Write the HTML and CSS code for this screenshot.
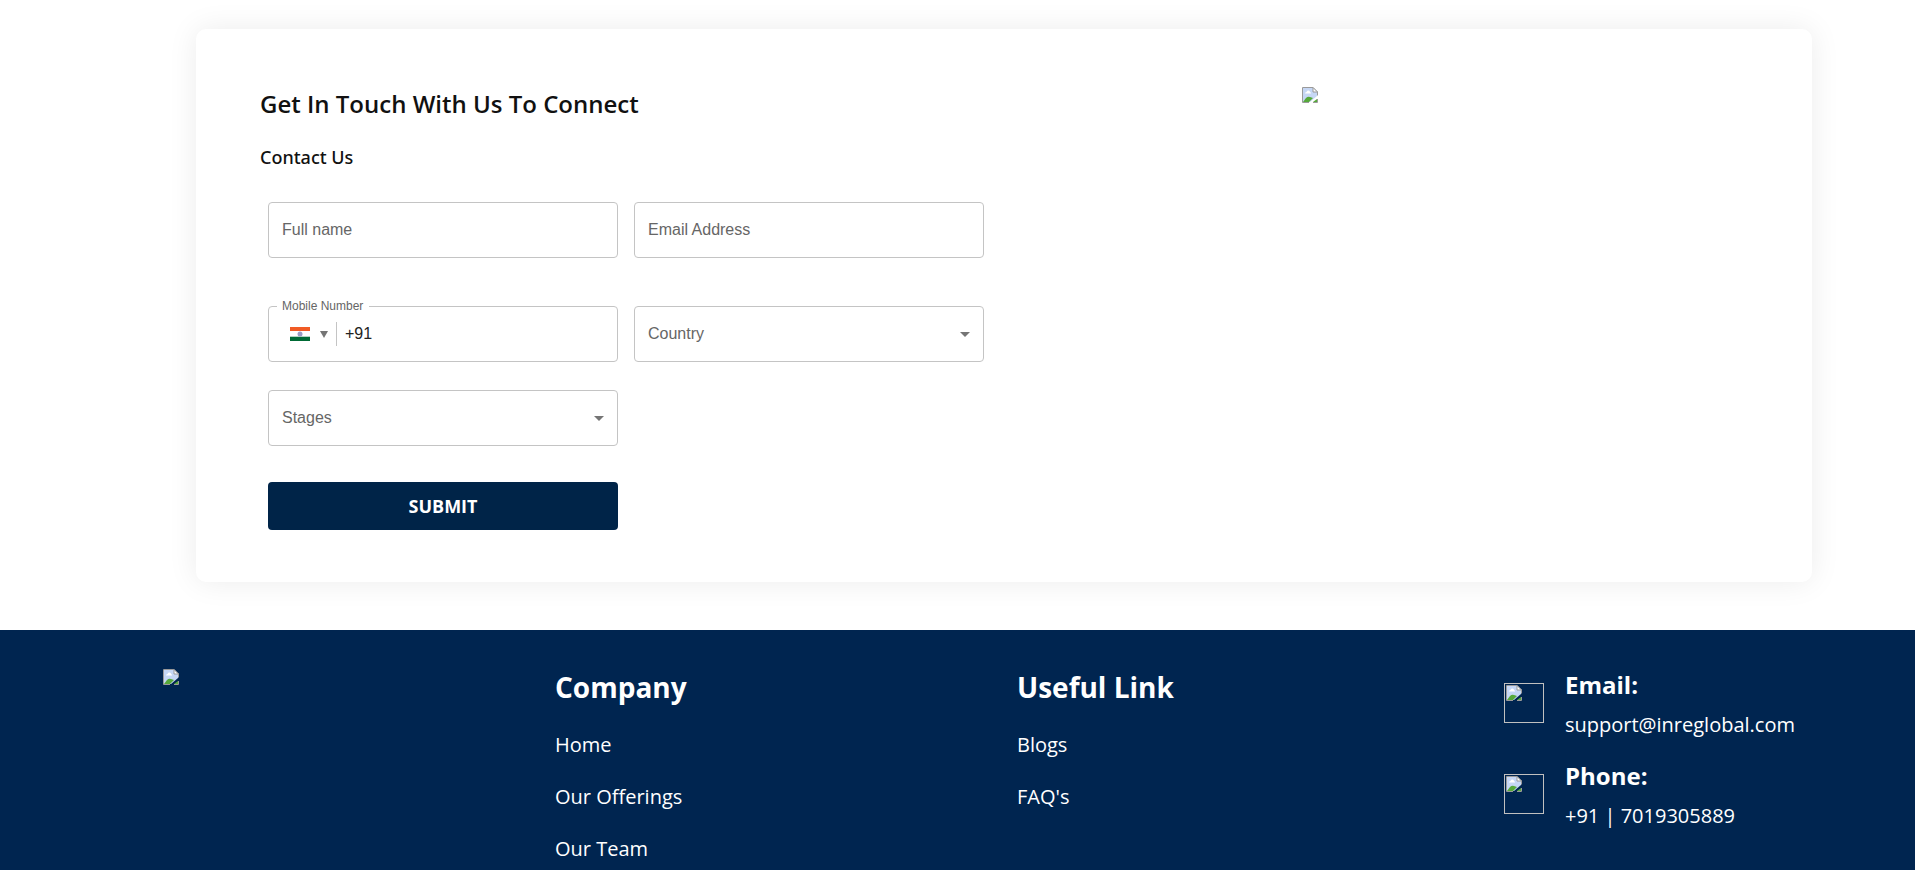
FILE: index.html
```html
<!DOCTYPE html>
<html lang="en">
<head>
<meta charset="utf-8">
<title>Contact Us</title>
<link rel="stylesheet" href="styles.css">
</head>
<body>
<svg class="sprite" aria-hidden="true">
  <symbol id="broken" viewBox="0 0 16 16">
    <path d="M1 1h10l4 4v4L8 15H1z" fill="#c6d7f5"/>
    <path d="M1 15l3-4q2-2 4-1l3 1-4 4z" fill="#56a93a"/>
    <path d="M3 6.500q0-1.500 1.500-1.500Q5 3 6.500 3.500 8 3.500 8 5q1 .2 1 1.500z" fill="#fff"/>
    <path d="M.5 15.500V.5H11L15.500 5v3.500M.5 15.500H7M11 15.500h4.500V12" fill="none" stroke="#9a9a9a"/>
    <path d="M11 .5V5h4.500z" fill="#fff" stroke="#9a9a9a"/>
    <path d="M11 15l4-3v3z" fill="#56a93a"/>
  </symbol>
</svg>
<main class="contact">
  <section class="card">
    <div class="content">
      <h1 class="title">Get In Touch With Us To Connect</h1>
      <h2 class="subtitle">Contact Us</h2>
      <form class="form">
        <div class="field"><input class="control" type="text" placeholder="Full name" aria-label="Full name"></div>
        <div class="field"><input class="control" type="email" placeholder="Email Address" aria-label="Email Address"></div>
        <fieldset class="field phone">
          <legend class="legend"><label for="mobile">Mobile Number</label></legend>
          <button class="flag-button" type="button" aria-label="Choose country code">
            <svg class="flag" viewBox="0 0 20 14" aria-hidden="true"><path fill="#f15b25" d="M0 0h20v4H0z"/><path fill="#fff" d="M0 4h20v6H0z"/><path fill="#006a35" d="M0 10h20v4H0z"/><path fill="#b5d3c3" d="M0 9h20v1H0z"/><circle cx="10" cy="7" r="2.500" fill="#9a9cc4"/></svg>
            <svg class="flag-arrow" viewBox="0 0 8 7" aria-hidden="true"><path fill="#757575" d="M0 0h8L4 7z"/></svg>
          </button>
          <input class="control number" id="mobile" type="tel" value="+91">
        </fieldset>
        <div class="field">
          <select class="control" aria-label="Country"><option>Country</option></select>
          <svg class="caret" viewBox="0 0 10 5" aria-hidden="true"><path fill="#757575" d="M0 0h10L5 5z"/></svg>
        </div>
        <div class="field">
          <select class="control" aria-label="Stages"><option>Stages</option></select>
          <svg class="caret" viewBox="0 0 10 5" aria-hidden="true"><path fill="#757575" d="M0 0h10L5 5z"/></svg>
        </div>
        <button class="submit" type="submit">SUBMIT</button>
      </form>
    </div>
    <svg class="broken" aria-hidden="true"><use href="#broken"/></svg>
  </section>
</main>
<footer class="footer">
  <svg class="broken" aria-hidden="true"><use href="#broken"/></svg>
  <nav class="links" aria-label="Company">
    <h3 class="links-title">Company</h3>
    <a class="link" href="#">Home</a>
    <a class="link" href="#">Our Offerings</a>
    <a class="link" href="#">Our Team</a>
  </nav>
  <nav class="links" aria-label="Useful Link">
    <h3 class="links-title">Useful Link</h3>
    <a class="link" href="#">Blogs</a>
    <a class="link" href="#">FAQ's</a>
  </nav>
  <address class="reach">
    <div class="reach-item">
      <span class="frame"><svg class="broken" aria-hidden="true"><use href="#broken"/></svg></span>
      <div><h4 class="reach-title">Email:</h4><a class="reach-link" href="mailto:support@inreglobal.com">support@inreglobal.com</a></div>
    </div>
    <div class="reach-item">
      <span class="frame"><svg class="broken" aria-hidden="true"><use href="#broken"/></svg></span>
      <div><h4 class="reach-title">Phone:</h4><a class="reach-link" href="tel:+917019305889">+91 | 7019305889</a></div>
    </div>
  </address>
</footer>
</body>
</html>
```
FILE: styles.css
```css
* { box-sizing: border-box; }
html { min-height: 100%; background: #fff; }
body { margin: 0; font-family: "Open Sans", sans-serif; color: #111; overflow: hidden; }
h1, h2, h3, h4 { margin: 0; }
.sprite { display: none; }
.broken { display: block; width: 16px; height: 16px; }

.contact { padding: 29px 103px 48px 196px; }
.card {
  display: grid;
  grid-template-columns: 7fr 3fr;
  padding: 58px 64px 52px;
  border-radius: 10px;
  background: #fff;
  box-shadow: 0 0 30px rgba(0, 0, 0, 0.08);
}
.title { font-size: 24px; line-height: 34px; font-weight: 600; }
.subtitle { margin-top: 23px; font-family: "Noto Sans", sans-serif; font-size: 18px; line-height: 26px; font-weight: 500; }
.form {
  display: grid;
  grid-template-columns: 350px 350px;
  column-gap: 16px;
  padding: 32px 8px 0;
  font-family: "Liberation Sans", Arial, sans-serif;
}
.field {
  position: relative;
  height: 56px;
  min-width: 0;
  margin: 0 0 28px;
  padding: 0;
  border: 1px solid #c4c4c4;
  border-radius: 4px;
}
.field:nth-child(-n+2) { margin-bottom: 48px; }
.control {
  width: 100%;
  height: 100%;
  padding: 0 13px;
  border: 0;
  outline: 0;
  background: transparent;
  font: 16px "Liberation Sans", Arial, sans-serif;
  color: #666;
  appearance: none;
}
select.control { padding-bottom: 2px; }
.control::placeholder { color: #666; opacity: 1; }
.caret { position: absolute; right: 13px; top: 25px; width: 10px; height: 5px; pointer-events: none; }
.phone { display: flex; align-items: center; }
.legend {
  position: absolute;
  left: 8px;
  top: -9px;
  padding: 0 6px 0 5px;
  background: #fff;
  font-size: 12px;
  line-height: 16px;
  color: #666;
}
.flag-button {
  display: flex;
  align-items: center;
  gap: 10px;
  height: 24px;
  margin-left: 13px;
  padding: 0 8px;
  border: 0;
  border-right: 1px solid #c4c4c4;
  background: none;
}
.flag { width: 20px; height: 14px; }
.flag-arrow { width: 8px; height: 7px; }
.number { flex: 1; padding: 0 8px; color: #222; }
.submit {
  grid-column: 1;
  height: 48px;
  margin-top: 8px;
  border: 0;
  border-radius: 4px;
  background: #002448;
  color: #fff;
  font: 700 18px "Open Sans", sans-serif;
}

.footer {
  display: grid;
  grid-template-columns: 392fr 462fr 487fr 411fr;
  padding: 39px 0 40px 163px;
  background: #002550;
  color: #fff;
}
.links { display: flex; flex-direction: column; align-items: flex-start; }
.links-title { margin-bottom: 26px; font-size: 28px; line-height: 36px; font-weight: 700; }
.link { font-size: 20px; line-height: 28px; margin-bottom: 24px; color: #fff; text-decoration: none; }
.reach { font-style: normal; }
.reach-item { display: flex; gap: 21px; margin-bottom: 18px; }
.frame { flex: none; width: 40px; height: 40px; margin-top: 14px; padding: 1px; border: 1px solid #c0c0c0; }
.reach-title { font-size: 24px; line-height: 32px; font-weight: 700; }
.reach-link { display: block; margin-top: 7px; font-size: 20px; line-height: 34px; color: #fff; text-decoration: none; }
```
